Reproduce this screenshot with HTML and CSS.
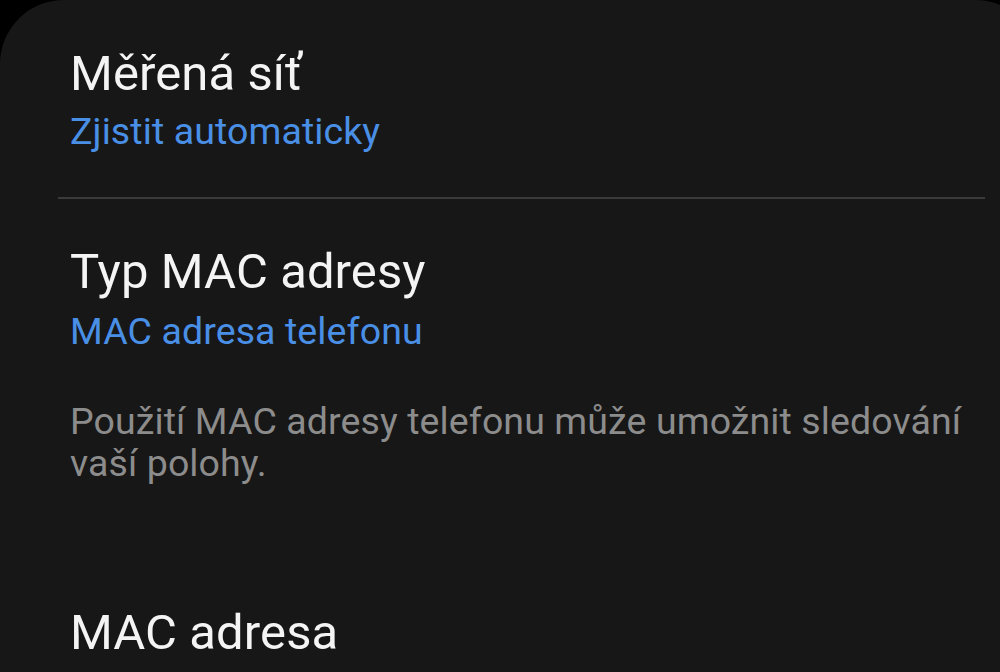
FILE: index.html
```html
<!DOCTYPE html>
<html lang="cs">
<head>
    <meta charset="UTF-8">
    <meta name="viewport" content="width=device-width, initial-scale=1.0">
    <title>Nastavení Wi-Fi</title>
    <link rel="stylesheet" href="styles.css">
</head>
<body>
    <div class="card">
        <div class="item first">
            <p class="title">Měřená síť</p>
            <p class="value">Zjistit automaticky</p>
        </div>
        <div class="divider"></div>
        <div class="item second">
            <p class="title">Typ MAC adresy</p>
            <p class="value">MAC adresa telefonu</p>
            <p class="note">Použití MAC adresy telefonu může umožnit sledování vaší polohy.</p>
        </div>
        <div class="item third">
            <p class="title">MAC adresa</p>
        </div>
    </div>
</body>
</html>
```

FILE: styles.css
```css
html, body {
    margin: 0;
    height: 100%;
    overflow: hidden;
    background: #000;
}
body {
    font-family: Roboto, "Liberation Sans", sans-serif;
}
.card {
    background: #171717;
    margin-right: -41px;
    min-height: 100%;
    border-radius: 64px 66px 0 0;
}
p {
    margin: 0;
}
.item {
    padding-left: 70px;
    padding-right: 56px;
}
.title {
    color: #f4f4f4;
    font-size: 49px;
    line-height: 56px;
    letter-spacing: 0.1px;
}
.value {
    color: #4a8fe6;
    font-size: 37.5px;
    line-height: 44px;
    letter-spacing: 0.1px;
    margin-top: 7px;
}
.note {
    color: #8c8c8c;
    font-size: 37.5px;
    line-height: 42px;
    letter-spacing: 0.1px;
    margin-top: 47px;
    padding-right: 20px;
}
.first {
    padding-top: 46px;
    padding-bottom: 44px;
}
.divider {
    height: 2px;
    background: #3a3a3a;
    margin-left: 58px;
    margin-right: 56px;
}
.second {
    padding-top: 45px;
}
.second .value {
    margin-top: 9px;
}
.third {
    padding-top: 121px;
}
```
